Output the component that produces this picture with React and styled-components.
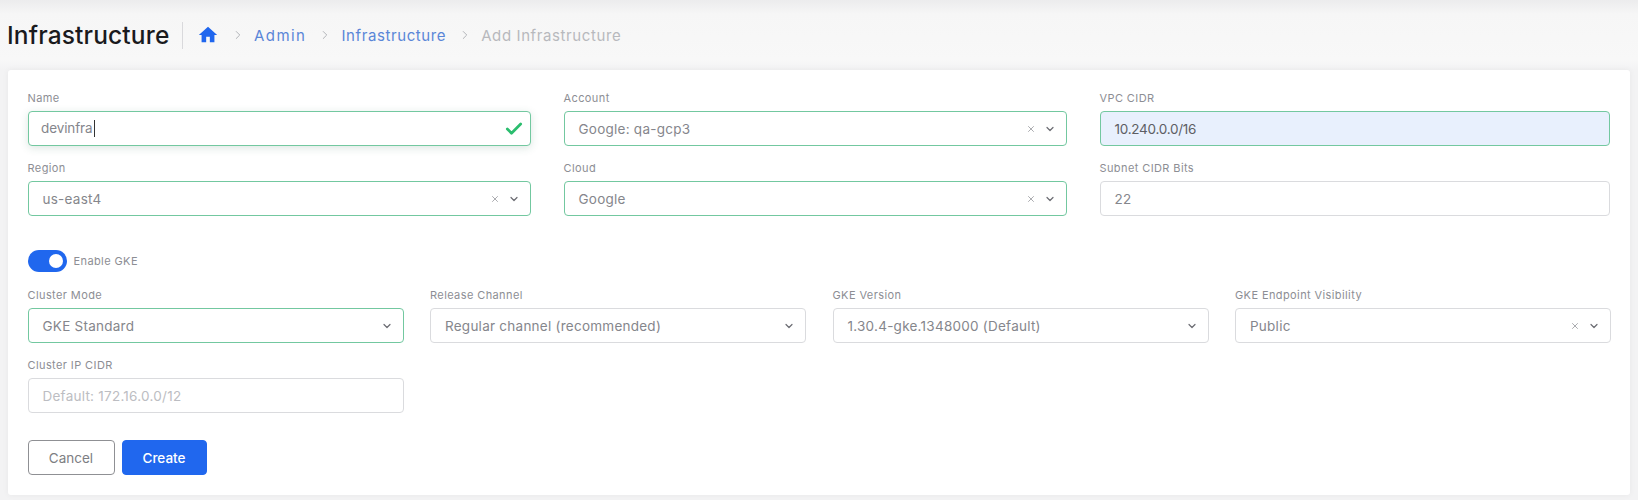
import React from 'react'
import styled, { createGlobalStyle } from 'styled-components'
import { Check, ChevronDown, ChevronRight, X } from 'lucide-react'
import { MdHome } from 'react-icons/md'

const GlobalStyle = createGlobalStyle`
    html, body {
        margin: 0;
        height: 500px;
        overflow: hidden;
        background: #f4f4f5;
        font-family: Inter, "Open Sans", sans-serif;
    }
`

const Page = styled.div`
    height: 500px;
    background: linear-gradient(#ececed 0, #f6f6f6 14px, #f8f8f8 60px, #f3f3f4 70px);
`

const Header = styled.header`
    height: 70px;
    padding-left: 7px;
    display: flex;
    align-items: center;
`

const Title = styled.h1`
    margin: 0;
    width: 175px;
    height: 27px;
    line-height: 27px;
    font-size: 24.5px;
    font-weight: 500;
    letter-spacing: 0.15px;
    color: #1a1a1d;
    border-right: 1px solid #d9d9dc;
`

const Crumbs = styled.nav`
    display: flex;
    align-items: center;
    margin-left: 14px;
    font-size: 15px;
    letter-spacing: 0.6px;
`

const Crumb = styled.span`
    color: ${p => (p.$current ? '#b7b9bd' : '#5a86d8')};
    letter-spacing: ${p => (p.$wide ? '1.45px' : 'inherit')};
`

const Sep = styled(ChevronRight)`
    margin: 0 9px 0 12px;
    color: #a8aaaf;
`

const Card = styled.main`
    width: 1583px;
    margin-left: 7.5px;
    padding: 21px 19.5px 20px 20px;
    background: #fff;
    border-radius: 3px;
    box-shadow: 0 0 6px rgba(0, 0, 0, 0.05);
`

const Row = styled.div`
    display: grid;
    grid-template-columns: ${p => p.$cols};
    column-gap: ${p => p.$gap}px;
    margin-bottom: 15px;
`

const Field = styled.div`
    min-width: 0;
`

const Label = styled.div`
    height: 14px;
    line-height: 14px;
    margin-bottom: 6px;
    font-size: 11px;
    letter-spacing: 0.4px;
    color: #8d8e94;
`

const Control = styled.div`
    height: 35px;
    box-sizing: border-box;
    padding: 0 10px 0 ${p => (p.$focus ? '12.5px' : '14px')};
    display: flex;
    align-items: center;
    font-size: 13.5px;
    letter-spacing: ${p => (p.$focus ? '-0.1px' : '0.25px')};
    border-radius: 4px;
    border: 1px solid ${p => (p.$valid ? '#73c8a0' : '#dadbde')};
    background: ${p => (p.$filled ? '#e8f0fd' : '#fff')};
    color: ${p => (p.$filled ? '#5d5e64' : '#85868c')};
    box-shadow: ${p => (p.$focus ? '0 2px 8px rgba(40, 100, 70, 0.16)' : 'none')};
`

const Value = styled.span`
    flex: 1;
    letter-spacing: ${p => (p.$numeric ? '-0.25px' : 'inherit')};
    color: ${p => (p.$placeholder ? '#bcbdc2' : 'inherit')};
`

const Caret = styled.span`
    display: inline-block;
    width: 1px;
    height: 17px;
    margin-left: 1px;
    vertical-align: -4px;
    background: #333;
`

const ClearIcon = styled(X)`
    color: #9a9ba0;
    margin-right: 8px;
`

const ArrowIcon = styled(ChevronDown)`
    color: #6b6c72;
`

const CheckIcon = styled(Check)`
    color: #2bbd6e;
    margin-right: -4px;
`

const ToggleRow = styled.div`
    display: flex;
    align-items: center;
    gap: 7px;
    margin: 34px 0 16px;
    font-size: 11px;
    letter-spacing: 0.4px;
    color: #8d8e94;
`

const Toggle = styled.div`
    width: 39px;
    height: 22px;
    box-sizing: border-box;
    padding: 4px 4px 0 0;
    display: flex;
    justify-content: flex-end;
    border-radius: 11px;
    background: #2067ee;
`

const Knob = styled.div`
    width: 14px;
    height: 14px;
    border-radius: 50%;
    background: #fff;
`

const Actions = styled.div`
    display: flex;
    gap: 7px;
    margin-top: 27px;
`

const Button = styled.button`
    width: ${p => p.$width}px;
    height: 35px;
    padding: 0;
    font-family: inherit;
    font-size: 13.5px;
    font-weight: ${p => (p.$primary ? 500 : 400)};
    border-radius: 4px;
    border: 1px solid ${p => (p.$primary ? '#2067ee' : '#8f9094')};
    background: ${p => (p.$primary ? '#2067ee' : '#fff')};
    color: ${p => (p.$primary ? '#fff' : '#7d7e83')};
`

const Select = ({ label, value, valid, clearable }) => (
    <Field>
        <Label>{label}</Label>
        <Control $valid={valid}>
            <Value>{value}</Value>
            {clearable && <ClearIcon size={10} />}
            <ArrowIcon size={12} strokeWidth={2.4} />
        </Control>
    </Field>
)

const App = () => {
    return (
        <Page>
            <GlobalStyle />
            <Header>
                <Title>Infrastructure</Title>
                <Crumbs>
                    <MdHome size={22} color='#1f66ee' />
                    <Sep size={14} strokeWidth={1.5} />
                    <Crumb $wide>Admin</Crumb>
                    <Sep size={14} strokeWidth={1.5} />
                    <Crumb>Infrastructure</Crumb>
                    <Sep size={14} strokeWidth={1.5} />
                    <Crumb $current>Add Infrastructure</Crumb>
                </Crumbs>
            </Header>
            <Card>
                <Row $cols='503px 503px 510.5px' $gap={33}>
                    <Field>
                        <Label>Name</Label>
                        <Control $valid $focus>
                            <Value>devinfra<Caret /></Value>
                            <CheckIcon size={20} strokeWidth={3.3} />
                        </Control>
                    </Field>
                    <Select label='Account' value='Google: qa-gcp3' valid clearable />
                    <Field>
                        <Label>VPC CIDR</Label>
                        <Control $valid $filled>
                            <Value $numeric>10.240.0.0/16</Value>
                        </Control>
                    </Field>
                </Row>
                <Row $cols='503px 503px 510.5px' $gap={33}>
                    <Select label='Region' value='us-east4' valid clearable />
                    <Select label='Cloud' value='Google' valid clearable />
                    <Field>
                        <Label>Subnet CIDR Bits</Label>
                        <Control>
                            <Value>22</Value>
                        </Control>
                    </Field>
                </Row>
                <ToggleRow>
                    <Toggle><Knob /></Toggle>
                    Enable GKE
                </ToggleRow>
                <Row $cols='repeat(4, 376px)' $gap={26.5}>
                    <Select label='Cluster Mode' value='GKE Standard' valid />
                    <Select label='Release Channel' value='Regular channel (recommended)' />
                    <Select label='GKE Version' value='1.30.4-gke.1348000 (Default)' />
                    <Select label='GKE Endpoint Visibility' value='Public' clearable />
                </Row>
                <Row $cols='376px' $gap={0}>
                    <Field>
                        <Label>Cluster IP CIDR</Label>
                        <Control>
                            <Value $placeholder>Default: 172.16.0.0/12</Value>
                        </Control>
                    </Field>
                </Row>
                <Actions>
                    <Button $width={87}>Cancel</Button>
                    <Button $width={85} $primary>Create</Button>
                </Actions>
            </Card>
        </Page>
    )
}

export default App
